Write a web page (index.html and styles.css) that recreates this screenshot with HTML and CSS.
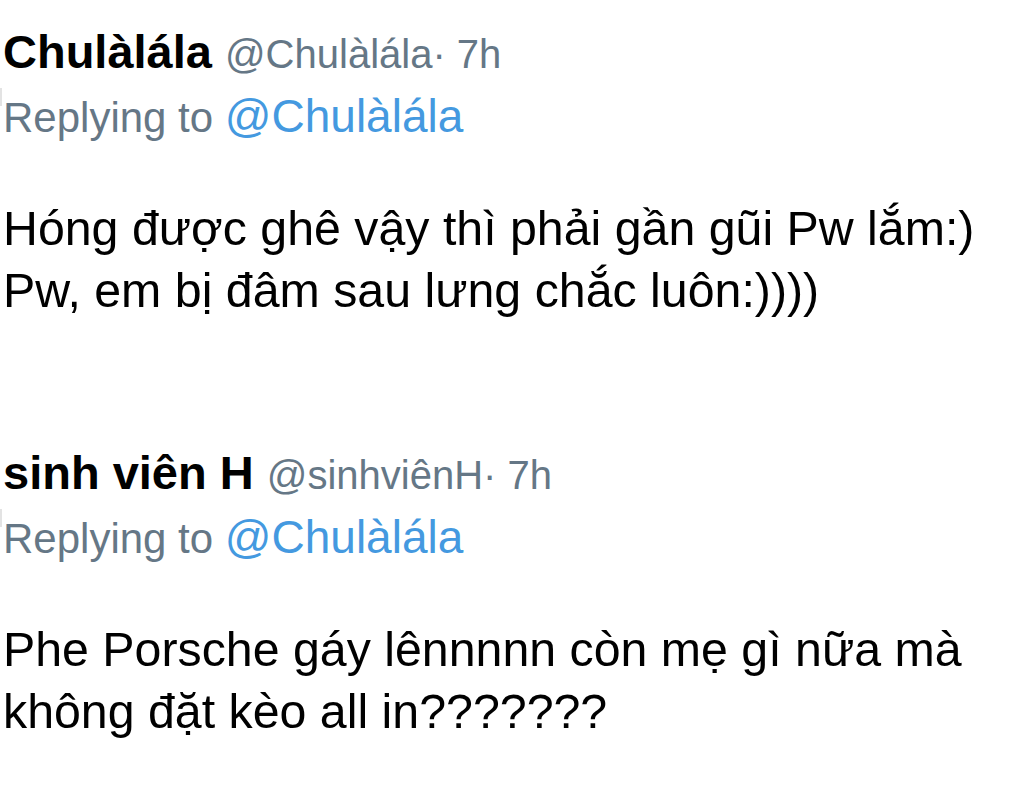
FILE: index.html
```html
<!DOCTYPE html>
<html lang="vi">
<head>
<meta charset="utf-8">
<title>Replies</title>
<link rel="stylesheet" href="styles.css">
</head>
<body>
<div class="thread">
  <article class="tweet">
    <div class="head"><span class="name">Chulàlála</span> <span class="handle">@Chulàlála· 7h</span></div>
    <div class="reply">Replying to <span class="mention">@Chulàlála</span></div>
    <p class="text">Hóng được ghê vậy thì phải gần gũi Pw lắm:)<br>Pw, em bị đâm sau lưng chắc luôn:))))</p>
  </article>
  <article class="tweet">
    <div class="head"><span class="name">sinh viên H</span> <span class="handle">@sinhviênH· 7h</span></div>
    <div class="reply">Replying to <span class="mention">@Chulàlála</span></div>
    <p class="text">Phe Porsche gáy lênnnnn còn mẹ gì nữa mà<br>không đặt kèo all in???????</p>
  </article>
</div>
</body>
</html>
```
FILE: styles.css
```css
html, body {
  margin: 0;
  padding: 0;
  background: #ffffff;
}
body {
  font-family: "Liberation Sans", Arial, Helvetica, sans-serif;
  color: #000000;
  width: 1016px;
  height: 806px;
  overflow: hidden;
}
.thread {
  display: flex;
  flex-direction: column;
  gap: 124px;
  padding: 24px 0 0 3px;
}
.tweet {
  position: relative;
}
.tweet::before {
  content: "";
  position: absolute;
  left: -3px;
  top: 64px;
  width: 2px;
  height: 18px;
  background: #e3e3e3;
}
.head {
  font-size: 47px;
  line-height: 56px;
  white-space: nowrap;
}
.name {
  font-weight: 700;
  color: #000000;
}
.handle {
  font-size: 40px;
  color: #657786;
}
.reply {
  margin-top: 4px;
  font-size: 42px;
  line-height: 60px;
  color: #657786;
  white-space: nowrap;
}
.mention {
  font-size: 46px;
  color: #4499e0;
}
.text {
  margin: 49px 0 0 0;
  font-size: 48.3px;
  line-height: 62px;
  white-space: nowrap;
}
```
